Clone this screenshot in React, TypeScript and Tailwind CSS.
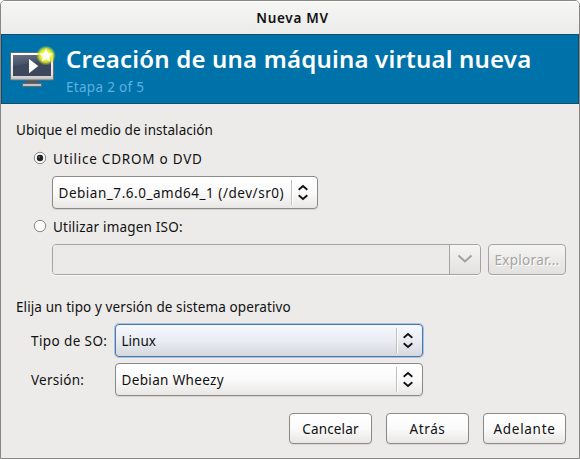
import type { ReactNode } from 'react';

function UpDown() {
  return (
    <svg width="12" height="18" viewBox="0 0 12 18" fill="none" stroke="#111" strokeWidth="1.8">
      <path d="M1.7 5.7 L6 2 L10.3 5.7" />
      <path d="M1.7 11.3 L6 15 L10.3 11.3" />
    </svg>
  );
}

function Combo({ children, className, focused = false }: { children: ReactNode; className: string; focused?: boolean }) {
  const skin = focused
    ? 'border-[#4d76ab] from-[#f5f9ff] via-[#e9edf3] to-[#d5d9de] shadow-[0_0_0_1px_#a9c2e0]'
    : 'border-[#8b8a87] from-white via-[#fafafa] to-[#e8e7e5] shadow-[0_1px_1px_#d3d2cf]';
  return (
    <div className={`flex h-[33px] items-center rounded-[4px] border bg-linear-to-b pl-[5.5px] pr-2 ${skin} ${className}`}>
      <div className="h-5 flex-1 whitespace-nowrap leading-5">{children}</div>
      <div className="mr-1 h-[25px] w-0.5 border-l border-r border-l-[#bfbebc] border-r-white" />
      <UpDown />
    </div>
  );
}

function Button({ children, className = '' }: { children: ReactNode; className?: string }) {
  return (
    <button className={`flex h-[31px] w-[83px] items-center justify-center whitespace-nowrap rounded-[4px] border border-[#8b8a87] bg-linear-to-b from-white via-[#fafafa] to-[#e8e7e5] leading-5 shadow-[0_1px_1px_#d9d8d6] ${className}`}>
      {children}
    </button>
  );
}

function Radio({ checked = false }: { checked?: boolean }) {
  return (
    <svg className="-mt-0.5" width="14" height="14" viewBox="0 0 14 14">
      <circle cx="7" cy="7" r="5.7" fill="#fff" stroke="#858481" />
      {checked && <circle cx="7" cy="7" r="3.2" fill="#202327" />}
      {checked && <circle cx="6.2" cy="6.1" r="0.9" fill="#70757b" />}
    </svg>
  );
}

function MachineIcon() {
  return (
    <svg width="48" height="46" viewBox="0 0 48 46">
      <defs>
        <radialGradient id="glow">
          <stop offset="0.45" stopColor="#f6fb2c" />
          <stop offset="0.7" stopColor="#dcea2a" stopOpacity="0.85" />
          <stop offset="1" stopColor="#a8d22e" stopOpacity="0" />
        </radialGradient>
        <linearGradient id="screen" x1="0" y1="0" x2="0.3" y2="1">
          <stop offset="0" stopColor="#667184" />
          <stop offset="0.45" stopColor="#4a5468" />
          <stop offset="0.5" stopColor="#3f495d" />
          <stop offset="1" stopColor="#3d475c" />
        </linearGradient>
        <linearGradient id="bezel" x1="0" y1="0" x2="0" y2="1">
          <stop offset="0" stopColor="#fff" />
          <stop offset="0.8" stopColor="#e2e2e2" />
          <stop offset="1" stopColor="#bcbcbc" />
        </linearGradient>
      </defs>
      <path d="M19 35h10l1 3.5H18z" fill="#55585c" />
      <rect x="14.5" y="38.5" width="19" height="3" rx="0.5" fill="#c4c4c4" stroke="#66686b" />
      <rect x="2.5" y="7.5" width="43" height="27.5" rx="1.2" fill="url(#bezel)" stroke="#6a6d70" />
      <rect x="5" y="10" width="38" height="21" fill="url(#screen)" />
      <path d="M21 14 L30.3 21.1 L21 28.3z" fill="#fff" />
      <circle cx="38" cy="10.5" r="10" fill="url(#glow)" />
      <path d="M38 3.6l2 4.3 4.7.6-3.4 3.3.8 4.6-4.1-2.3-4.1 2.3.8-4.6-3.4-3.3 4.7-.6z" fill="#fff" />
    </svg>
  );
}

export default function App() {
  return (
    <div className="h-[459px] w-[580px] bg-white font-['Noto_Sans',sans-serif] text-[13.5px] text-[#111]">
      <div className="flex h-full w-full flex-col overflow-hidden rounded-t-[5px] border border-[#888785] bg-[#ecebe9]">
        <div className="flex h-[33px] shrink-0 items-center justify-center border-t border-white bg-linear-to-b from-[#f6f6f5] to-[#ebebe9] pl-[5px] font-semibold leading-5 tracking-[0.7px]">
          <span>Nueva MV</span>
        </div>
        <header className="flex h-[70px] shrink-0 border border-[#174c68] bg-[#0072aa] pl-1.5">
          <div className="pt-[10px]"><MachineIcon /></div>
          <div className="pl-[10px] pt-2">
            <h1 className="h-8 whitespace-nowrap text-2xl font-semibold leading-8 tracking-[0.19px] text-white">Creación de una máquina virtual nueva</h1>
            <p className="mt-0.5 whitespace-nowrap leading-5 tracking-[0.3px] text-[#5db0e0]">Etapa 2 of 5</p>
          </div>
        </header>
        <main className="flex flex-1 flex-col pl-[15px] pr-[13px] pt-4">
          <p className="h-5 whitespace-nowrap leading-5 tracking-[0.05px]">Ubique el medio de instalación</p>
          <label className="ml-[17px] mt-[9px] flex h-5 items-center gap-[6px] whitespace-nowrap leading-5 tracking-[0.76px]">
            <Radio checked /><span>Utilice CDROM o DVD</span>
          </label>
          <Combo className="ml-9 mt-[7px] w-[266px] tracking-[0.53px]"><span>Debian_7.6.0_amd64_1 (/dev/sr0)</span></Combo>
          <label className="ml-[17px] mt-2 flex h-5 items-center gap-[6px] whitespace-nowrap leading-5 tracking-[0.2px]">
            <Radio /><span>Utilizar imagen ISO:</span>
          </label>
          <div className="ml-9 mt-[7px] flex h-[31px] gap-[7px]">
            <div className="flex w-[429px] overflow-hidden rounded-[4px] border border-[#a5a4a1] shadow-[0_1px_0_#f8f8f7]">
              <div className="flex-1 bg-[#ebeae8]" />
              <div className="flex w-[31px] items-center justify-center border-l border-[#a5a4a1] bg-linear-to-b from-[#f4f4f3] to-[#e2e1df]">
                <svg className="-mt-0.5" width="16" height="10" viewBox="0 0 16 10" fill="none" stroke="#a0a09e" strokeWidth="2"><path d="M1.5 1.5 L8 7.5 L14.5 1.5" /></svg>
              </div>
            </div>
            <button disabled className="w-[78px] whitespace-nowrap rounded-[4px] border border-[#a5a4a1] bg-linear-to-b from-[#f4f4f3] to-[#e2e1df] leading-5 tracking-[0.3px] text-[#a5a4a2] shadow-[0_1px_0_#f8f8f7] text-shadow-[1px_1px_0_#fff]">Explorar...</button>
          </div>
          <p className="mt-[22px] h-5 whitespace-nowrap leading-5 tracking-[0.1px]">Elija un tipo y versión de sistema operativo</p>
          <div className="ml-[15px] mt-[7px] grid w-[392px] grid-cols-[84px_308px] items-center gap-y-1.5">
            <span className="whitespace-nowrap leading-5 tracking-[0.4px]">Tipo de SO:</span>
            <Combo focused className="w-[308px]"><span>Linux</span></Combo>
            <span className="whitespace-nowrap leading-5 tracking-[0.25px]">Versión:</span>
            <Combo className="w-[308px] tracking-[0.35px]"><span>Debian Wheezy</span></Combo>
          </div>
          <div className="mt-[17px] flex justify-end gap-3.5">
            <Button className="tracking-[0.15px]">Cancelar</Button>
            <Button className="tracking-[0.6px]">Atrás</Button>
            <Button className="tracking-[0.7px]">Adelante</Button>
          </div>
        </main>
      </div>
    </div>
  );
}
